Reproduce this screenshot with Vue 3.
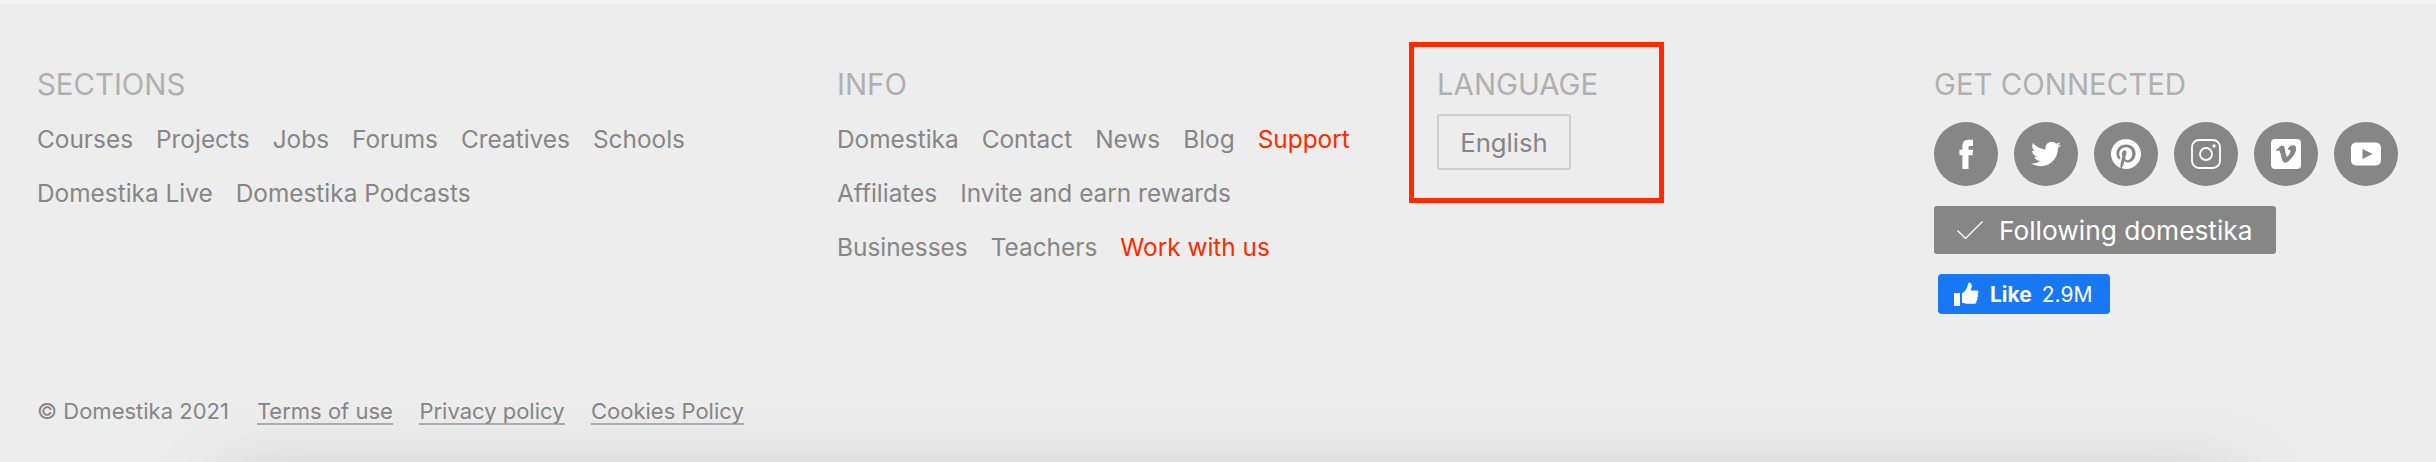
<template>
  <footer class="footer">
    <div class="footer__columns">
      <section class="col col--sections">
        <h4 class="col__title">SECTIONS</h4>
        <ul class="links">
          <li v-for="row in sections" :key="row[0]" class="links__row">
            <a v-for="item in row" :key="item" class="links__item">{{ item }}</a>
          </li>
        </ul>
      </section>

      <section class="col col--info">
        <h4 class="col__title">INFO</h4>
        <ul class="links">
          <li v-for="row in info" :key="row[0].label" class="links__row">
            <a
              v-for="item in row"
              :key="item.label"
              class="links__item"
              :class="{ 'links__item--hot': item.hot }"
            >{{ item.label }}</a>
          </li>
        </ul>
      </section>

      <section class="col col--language">
        <!-- red annotation frame from the screenshot -->
        <div class="highlight"></div>
        <h4 class="col__title">LANGUAGE</h4>
        <button class="lang-btn">English</button>
      </section>

      <section class="col col--connected">
        <h4 class="col__title">GET CONNECTED</h4>
        <div class="social">
          <a class="social__icon">
            <svg width="30" height="30" viewBox="0 0 24 24" fill="#fff">
              <path d="M14 8.5V6.6c0-.9.6-1.1 1-1.1h2.6V.5H14c-4 0-4.900 3-4.900 4.900v3.100H6.800v4.400h2.300V24h4.900V12.900h3.300l.4-4.400z" />
            </svg>
          </a>
          <a class="social__icon">
            <svg width="30" height="30" viewBox="0 0 24 24" fill="#fff">
              <path d="M23.953 4.57a10 10 0 01-2.825.775 4.958 4.958 0 002.163-2.723c-.951.555-2.005.959-3.127 1.184a4.92 4.92 0 00-8.384 4.482C7.69 8.095 4.067 6.13 1.64 3.162a4.822 4.822 0 00-.666 2.475c0 1.71.87 3.213 2.188 4.096a4.904 4.904 0 01-2.228-.616v.06a4.923 4.923 0 003.946 4.827 4.996 4.996 0 01-2.212.085 4.936 4.936 0 004.604 3.417 9.867 9.867 0 01-6.102 2.105c-.39 0-.779-.023-1.17-.067a13.995 13.995 0 007.557 2.209c9.053 0 13.998-7.496 13.998-13.985 0-.21 0-.42-.015-.63A9.935 9.935 0 0024 4.59z" />
            </svg>
          </a>
          <a class="social__icon">
            <svg width="30" height="30" viewBox="0 0 24 24" fill="#fff">
              <path d="M12.017 0C5.396 0 .029 5.367.029 11.987c0 5.079 3.158 9.417 7.618 11.162-.105-.949-.199-2.403.041-3.439.219-.937 1.406-5.957 1.406-5.957s-.359-.72-.359-1.781c0-1.663.967-2.911 2.168-2.911 1.024 0 1.518.769 1.518 1.688 0 1.029-.653 2.567-.992 3.992-.285 1.193.6 2.165 1.775 2.165 2.128 0 3.768-2.245 3.768-5.487 0-2.861-2.063-4.869-5.008-4.869-3.41 0-5.409 2.562-5.409 5.199 0 1.033.394 2.143.889 2.741.099.12.112.225.085.345-.09.375-.293 1.199-.334 1.363-.053.225-.172.271-.401.165-1.495-.69-2.433-2.878-2.433-4.646 0-3.776 2.748-7.252 7.92-7.252 4.158 0 7.392 2.967 7.392 6.923 0 4.135-2.607 7.462-6.233 7.462-1.214 0-2.354-.629-2.758-1.379l-.749 2.848c-.269 1.045-1.004 2.352-1.498 3.146 1.123.345 2.306.535 3.55.535 6.607 0 11.985-5.365 11.985-11.987C23.97 5.39 18.592.026 11.985.026L12.017 0z" />
            </svg>
          </a>
          <a class="social__icon">
            <svg width="30" height="30" viewBox="0 0 30 30" fill="none" stroke="#fff">
              <rect x="1" y="1" width="28" height="28" rx="7" stroke-width="1.8" />
              <circle cx="15" cy="15" r="6" stroke-width="1.8" />
              <circle cx="23" cy="7" r="1.7" fill="#fff" stroke="none" />
            </svg>
          </a>
          <a class="social__icon">
            <svg width="30" height="30" viewBox="0 0 30 30">
              <rect width="30" height="30" rx="4" fill="#fff" />
              <g transform="translate(5 5) scale(.84)">
                <path fill="#868686" d="M23.977 6.416c-.105 2.338-1.739 5.543-4.894 9.609-3.268 4.247-6.026 6.37-8.29 6.37-1.409 0-2.578-1.294-3.553-3.881L5.322 11.4C4.603 8.816 3.834 7.522 3.01 7.522c-.179 0-.806.378-1.881 1.132L0 7.197c1.185-1.044 2.351-2.084 3.501-3.128C5.08 2.701 6.266 1.984 7.055 1.91c1.867-.18 3.016 1.1 3.447 3.838.465 2.953.789 4.789.971 5.507.539 2.45 1.131 3.674 1.776 3.674.502 0 1.256-.796 2.265-2.385 1.004-1.589 1.54-2.797 1.612-3.628.144-1.371-.395-2.061-1.614-2.061-.574 0-1.167.121-1.777.391 1.186-3.868 3.434-5.757 6.762-5.637 2.473.06 3.628 1.664 3.493 4.797l-.013.01z" />
              </g>
            </svg>
          </a>
          <a class="social__icon">
            <svg width="30" height="24" viewBox="0 0 30 24">
              <rect width="30" height="23" y=".5" rx="5" fill="#fff" />
              <path fill="#868686" d="M11.500 7l10 5-10 5z" />
            </svg>
          </a>
        </div>
        <button class="follow-btn">
          <svg width="26" height="18" viewBox="0 0 26 18" fill="none" stroke="#fff" stroke-width="1.3">
            <path d="M.5 9.500l8 8L25.500.5" />
          </svg>
          <span>Following domestika</span>
        </button>
        <button class="fb-like">
          <svg width="26" height="26" viewBox="0 0 26 26" fill="#fff">
            <path d="M1 12h6v13H1z" />
            <path d="M9 12.500c3-2 5.500-5 6-9.500 0-1.500 2.800-1.800 3.500.3.700 2-.2 4.400-1 6.200h6c2.500 0 2.500 3 .8 3.500 1.500 1 1.200 3-.3 3.500 1 1 .7 2.800-.7 3.200.6 1.300-.2 3-1.800 3H14c-2 0-3.500-.7-5-1.200z" />
          </svg>
          <b>Like</b>
          <span>2.9M</span>
        </button>
      </section>
    </div>

    <div class="legal">
      <span class="legal__copy">© Domestika 2021</span>
      <a v-for="item in legal" :key="item" class="legal__link">{{ item }}</a>
    </div>
  </footer>
</template>

<script setup>
const sections = [
  ['Courses', 'Projects', 'Jobs', 'Forums', 'Creatives', 'Schools'],
  ['Domestika Live', 'Domestika Podcasts']
]

const info = [
  [
    { label: 'Domestika' },
    { label: 'Contact' },
    { label: 'News' },
    { label: 'Blog' },
    { label: 'Support', hot: true }
  ],
  [{ label: 'Affiliates' }, { label: 'Invite and earn rewards' }],
  [{ label: 'Businesses' }, { label: 'Teachers' }, { label: 'Work with us', hot: true }]
]

const legal = ['Terms of use', 'Privacy policy', 'Cookies Policy']
</script>

<style>
html, body {
  margin: 0;
  background: #ededed;
}
</style>

<style scoped>
.footer {
  position: relative;
  box-sizing: border-box;
  height: 462px;
  padding: 4px 0 0 37px;
  background-color: #ededed;
  background-image: linear-gradient(#f3f3f3, #f3f3f3);
  background-repeat: no-repeat;
  background-size: 100% 4px;
  font-family: Inter, "Liberation Sans", sans-serif;
  color: #868686;
  overflow: hidden;
}

/* soft shadow of whatever sits below the footer */
.footer::after {
  content: "";
  position: absolute;
  left: 220px;
  right: 196px;
  top: 480px;
  height: 60px;
  box-shadow: 0 0 80px rgba(0, 0, 0, 0.18);
}

.footer__columns {
  display: flex;
  height: 329px;
  padding-top: 65px;
  box-sizing: border-box;
}

.col--sections { width: 800px; }
.col--info { width: 600px; }
.col--language { width: 497px; position: relative; }

.col__title {
  margin: 0;
  font-size: 29.4px;
  line-height: 32px;
  font-weight: 400;
  color: #b0b0b0;
}

.links {
  list-style: none;
  margin: 23px 0 0;
  padding: 0;
}

.links__row {
  display: flex;
  gap: 23px;
  height: 54px;
  font-size: 24.4px;
  line-height: 30px;
}

.links__item--hot {
  color: #ff2a00;
}

.highlight {
  position: absolute;
  top: -27px;
  left: -28px;
  width: 255px;
  height: 161px;
  box-sizing: border-box;
  border: 5px solid #ff2a00;
}

.lang-btn {
  display: block;
  box-sizing: border-box;
  margin-top: 13px;
  width: 134px;
  height: 56px;
  border: 2px solid #cecece;
  border-radius: 3px;
  background: transparent;
  font: 400 25.7px Inter, "Liberation Sans", sans-serif;
  color: #868686;
}

.social {
  display: flex;
  gap: 16px;
  margin-top: 21px;
}

.social__icon {
  display: flex;
  align-items: center;
  justify-content: center;
  width: 64px;
  height: 64px;
  border-radius: 50%;
  background: #868686;
}

.follow-btn {
  display: flex;
  align-items: center;
  gap: 16px;
  box-sizing: border-box;
  width: 342px;
  height: 48px;
  margin: 20px 0 0;
  padding: 0 0 0 23px;
  border: 0;
  border-radius: 3px;
  background: #868686;
  font: 400 26.3px Inter, "Liberation Sans", sans-serif;
  color: #fff;
}

.fb-like {
  display: flex;
  align-items: center;
  box-sizing: border-box;
  width: 172px;
  height: 40px;
  margin: 20px 0 0 4px;
  padding: 0 0 0 15px;
  border: 0;
  border-radius: 4px;
  background: #1877f2;
  font: 400 21px Inter, "Liberation Sans", sans-serif;
  color: #fff;
}

.fb-like b {
  margin: 0 10px 0 11px;
  font-weight: 700;
}

.legal {
  display: flex;
  align-items: baseline;
  font-size: 22px;
  line-height: 30px;
  margin-top: 63px;
}

.legal__copy {
  margin-right: 28px;
}

.legal__link {
  margin-right: 26.5px;
  border-bottom: 2px solid #aeaeae;
  line-height: 24px;
}
</style>
